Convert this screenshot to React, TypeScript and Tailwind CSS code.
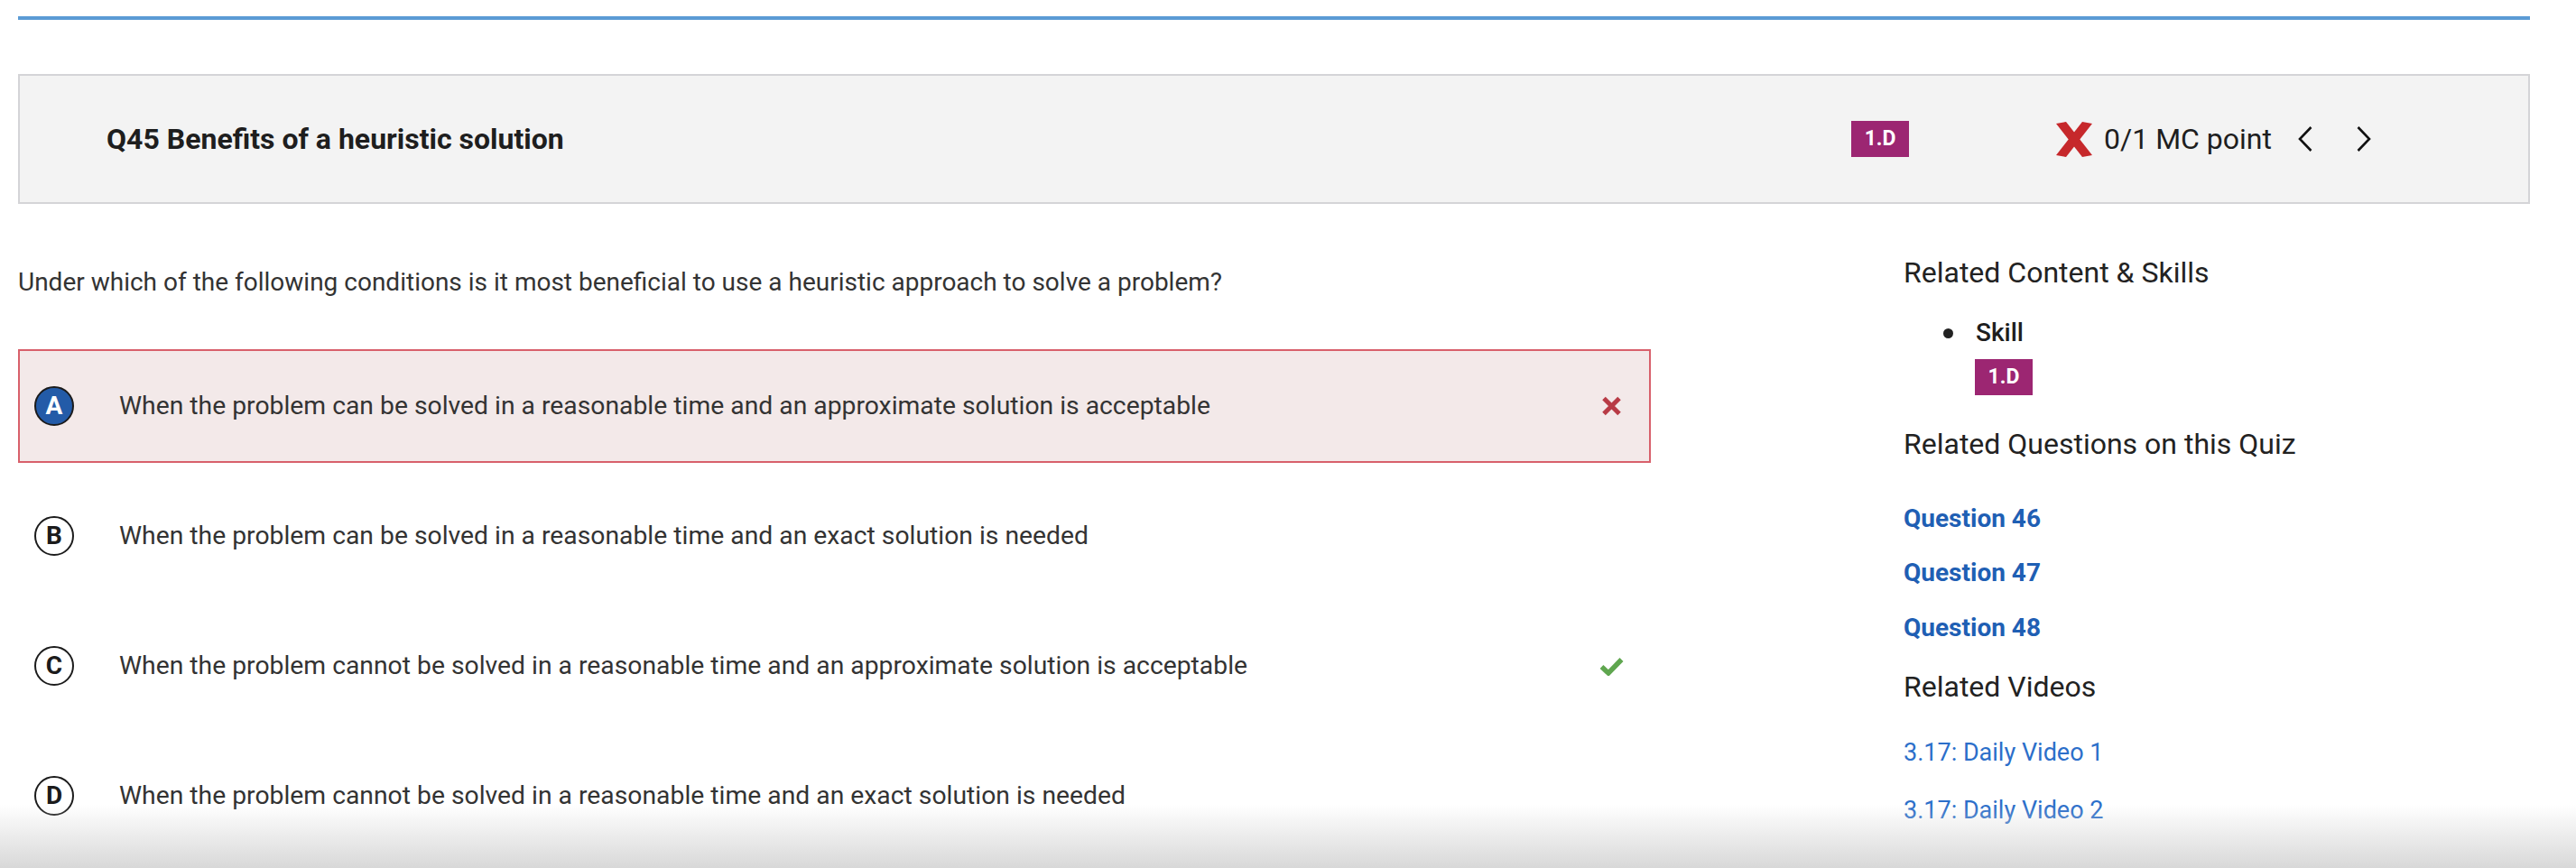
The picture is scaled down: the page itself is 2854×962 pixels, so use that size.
import React from 'react';

function BigX() {
  return (
    <svg width="40" height="39" viewBox="0 0 40 39" className="shrink-0">
      <polygon points="0,2 11,0 40,37 29,39" fill="#c6282b" />
      <polygon points="29,0 40,2 11,39 0,37" fill="#c6282b" />
    </svg>
  );
}

function Chevron({ dir }: { dir: 'left' | 'right' }) {
  return (
    <svg width="16" height="28" viewBox="0 0 16 28" className="shrink-0">
      <polyline
        points={dir === 'left' ? '14.5,1 2,14 14.5,27' : '1.5,1 14,14 1.5,27'}
        fill="none"
        stroke="#111"
        strokeWidth="2.6"
      />
    </svg>
  );
}

function SmallX() {
  return (
    <svg width="23" height="22" viewBox="0 0 23 22">
      <path d="M3 2.5 L20 19.5 M20 2.5 L3 19.5" stroke="#b83b46" strokeWidth="5" />
    </svg>
  );
}

function Check() {
  return (
    <svg width="27" height="21" viewBox="0 0 27 21">
      <polyline points="2.5,11 10,18 24.5,3" fill="none" stroke="#5fa64f" strokeWidth="5.5" />
    </svg>
  );
}

function Badge() {
  return (
    <span className="inline-flex h-[40px] w-[64px] items-center justify-center bg-[#9c2672] text-[23px] font-bold text-white">
      1.D
    </span>
  );
}

type Opt = { letter: string; text: string; state?: 'wrong' | 'right'; selected?: boolean };

const options: Opt[] = [
  {
    letter: 'A',
    text: 'When the problem can be solved in a reasonable time and an approximate solution is acceptable',
    state: 'wrong',
    selected: true,
  },
  { letter: 'B', text: 'When the problem can be solved in a reasonable time and an exact solution is needed' },
  {
    letter: 'C',
    text: 'When the problem cannot be solved in a reasonable time and an approximate solution is acceptable',
    state: 'right',
  },
  { letter: 'D', text: 'When the problem cannot be solved in a reasonable time and an exact solution is needed' },
];

function Option({ o }: { o: Opt }) {
  return (
    <div
      className={
        o.selected
          ? 'mb-[18px] flex h-[126px] items-center border-2 border-[#d8606b] bg-[#f3e9e9] pl-[16px] pr-[28px]'
          : 'mb-[18px] flex h-[126px] items-center border-2 border-transparent pl-[16px] pr-[28px]'
      }
    >
      <span
        className={
          o.selected
            ? 'flex h-[44px] w-[44px] shrink-0 items-center justify-center rounded-full border-2 border-[#1b1b1b] bg-[#235ba8] text-[28px] font-bold text-white'
            : 'flex h-[44px] w-[44px] shrink-0 items-center justify-center rounded-full border-2 border-[#1b1b1b] bg-white text-[28px] font-bold text-[#1b1b1b]'
        }
      >
        {o.letter}
      </span>
      <span className="ml-[50px] flex-1 text-[28.3px] text-[#333]">{o.text}</span>
      <span className="flex w-[28px] justify-center">
        {o.state === 'wrong' && <SmallX />}
        {o.state === 'right' && <Check />}
      </span>
    </div>
  );
}

export default function App() {
  return (
    <div className="relative h-[962px] w-full overflow-hidden bg-white font-['Roboto',sans-serif] text-[#222]">
      <div className="pl-[20px] pr-[51px]">
        <div className="mt-[18px] h-[4px] bg-[#5b9bd5]" />

        <header className="mt-[60px] flex h-[144px] items-center border-2 border-[#d4d4d7] bg-[#f3f3f3] pl-[96px] pr-[174px]">
          <h1 className="flex-1 text-[32px] font-bold text-[#1e1e1e]">Q45 Benefits of a heuristic solution</h1>
          <Badge />
          <div className="ml-[163px] flex items-center">
            <BigX />
            <span className="ml-[13px] text-[32px] text-[#1e1e1e]">0/1 MC point</span>
            <span className="ml-[29px]">
              <Chevron dir="left" />
            </span>
            <span className="ml-[49px]">
              <Chevron dir="right" />
            </span>
          </div>
        </header>

        <div className="flex">
          <main className="w-[1809px] shrink-0">
            <p className="mt-[67px] text-[28px] leading-[40px] text-[#333]">
              Under which of the following conditions is it most beneficial to use a heuristic approach to solve a
              problem?
            </p>
            <div className="mt-[54px]">
              {options.map((o) => (
                <Option key={o.letter} o={o} />
              ))}
            </div>
          </main>

          <aside className="ml-[280px] flex-1">
            <h2 className="mt-[56px] text-[32px] leading-[40px] text-[#222]">Related Content &amp; Skills</h2>
            <div className="mt-[29px] flex h-[36px] items-center">
              <span className="ml-[44px] h-[11px] w-[11px] rounded-full bg-[#222]" />
              <span className="ml-[25px] text-[28px] font-medium text-[#1e1e1e]">Skill</span>
            </div>
            <div className="ml-[79px] mt-[11px]">
              <Badge />
            </div>

            <h2 className="mt-[34px] text-[32px] leading-[40px] text-[#222]">Related Questions on this Quiz</h2>
            <div className="mt-[45px] h-[36px] text-[28px] font-bold leading-[36px] text-[#1f5fb4]">Question 46</div>
            <div className="mt-[24px] h-[36px] text-[28px] font-bold leading-[36px] text-[#1f5fb4]">Question 47</div>
            <div className="mt-[25px] h-[36px] text-[28px] font-bold leading-[36px] text-[#1f5fb4]">Question 48</div>

            <h2 className="mt-[27px] text-[32px] leading-[40px] text-[#222]">Related Videos</h2>
            <div className="mt-[35px] h-[36px] text-[27px] leading-[36px] text-[#2c6fca]">3.17: Daily Video 1</div>
            <div className="mt-[28px] h-[36px] text-[27px] leading-[36px] text-[#2c6fca]">3.17: Daily Video 2</div>
          </aside>
        </div>
      </div>

      <div className="pointer-events-none absolute bottom-0 left-0 right-0 h-[70px] bg-gradient-to-b from-transparent to-[#d8d8d8]" />
    </div>
  );
}
